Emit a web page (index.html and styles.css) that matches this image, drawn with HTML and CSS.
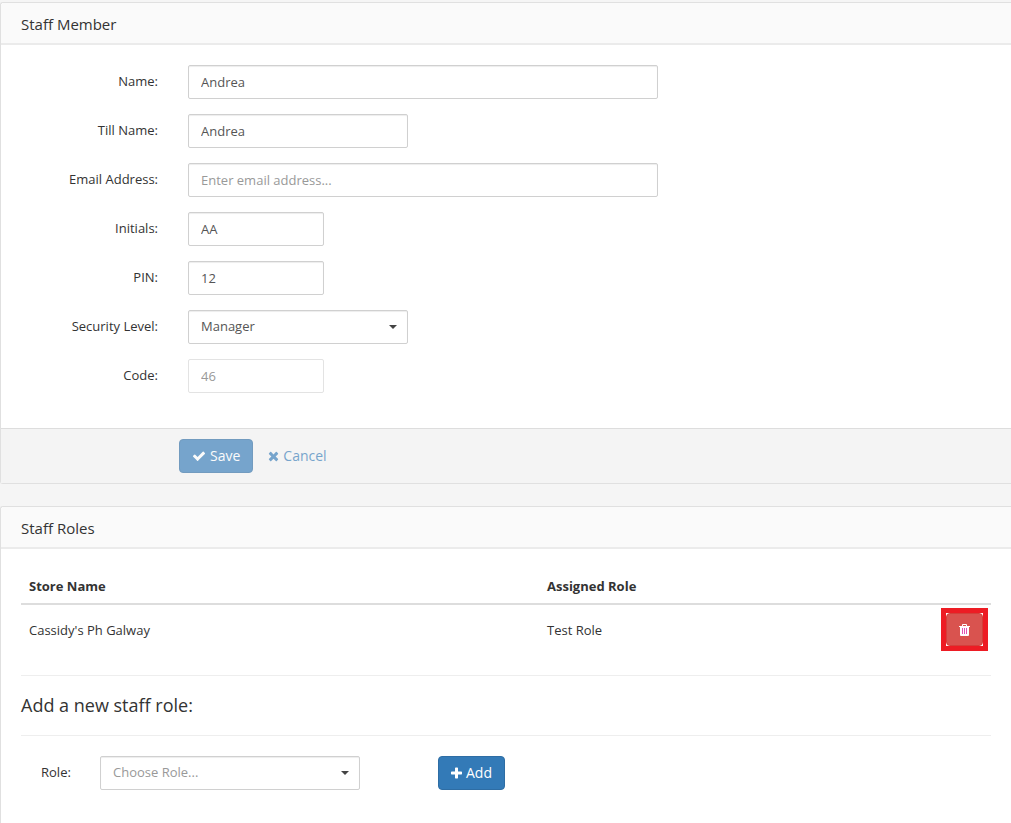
FILE: index.html
```html
<!DOCTYPE html>
<html lang="en">
<head>
<meta charset="utf-8">
<title>Staff Member</title>
<link rel="stylesheet" href="styles.css">
</head>
<body>
<main>
  <form class="panel">
    <h2 class="panel-title">Staff Member</h2>
    <div class="panel-body fields">
      <div class="field"><label for="name">Name:</label><input class="control wide" id="name" type="text" value="Andrea"></div>
      <div class="field"><label for="till">Till Name:</label><input class="control medium" id="till" type="text" value="Andrea"></div>
      <div class="field"><label for="email">Email Address:</label><input class="control wide" id="email" type="email" placeholder="Enter email address..."></div>
      <div class="field"><label for="initials">Initials:</label><input class="control small" id="initials" type="text" value="AA"></div>
      <div class="field"><label for="pin">PIN:</label><input class="control small" id="pin" type="text" value="12"></div>
      <div class="field"><label for="level">Security Level:</label>
        <div class="select medium"><select class="control" id="level"><option>Manager</option></select></div>
      </div>
      <div class="field"><label for="code">Code:</label><input class="control small" id="code" type="text" value="46" disabled></div>
    </div>
    <div class="panel-footer">
      <button class="btn primary" type="submit" disabled>
        <svg class="icon-check" viewBox="0 0 1792 1792" aria-hidden="true"><path d="M1671 566q0 40-28 68l-724 724-136 136q-28 28-68 28t-68-28l-136-136-362-362q-28-28-28-68t28-68l136-136q28-28 68-28t68 28l294 295 656-657q28-28 68-28t68 28l136 136q28 28 28 68z"/></svg>
        Save
      </button>
      <button class="btn link" type="button" disabled>
        <svg class="icon-plain" viewBox="0 0 1408 1792" aria-hidden="true"><path d="M1298 1322q0 40-28 68l-136 136q-28 28-68 28t-68-28l-294-294-294 294q-28 28-68 28t-68-28l-136-136q-28-28-28-68t28-68l294-294-294-294q-28-28-28-68t28-68l136-136q28-28 68-28t68 28l294 294 294-294q28-28 68-28t68 28l136 136q28 28 28 68t-28 68l-294 294 294 294q28 28 28 68z"/></svg>
        Cancel
      </button>
    </div>
  </form>

  <section class="panel roles">
    <h2 class="panel-title">Staff Roles</h2>
    <div class="panel-body">
      <table>
        <thead><tr><th class="store">Store Name</th><th>Assigned Role</th><th></th></tr></thead>
        <tbody><tr>
          <td>Cassidy's Ph Galway</td>
          <td>Test Role</td>
          <td class="actions"><div class="highlight"><button class="btn danger" type="button" aria-label="Delete role">
            <svg class="icon-trash" viewBox="0 0 11 12" aria-hidden="true"><path fill-rule="evenodd" d="M3 2V1Q3 0 4 0h3q1 0 1 1v1h3v1h-1v8q0 1-1 1H2q-1 0-1-1V3H0V2zM4 1v1h3V1zM3 4v6h1V4zM5 4v6h1V4zM7 4v6h1V4z"/><path class="slots" d="M3 4h1v6H3zM5 4h1v6H5zM7 4h1v6H7z"/></svg>
          </button></div></td>
        </tr></tbody>
      </table>
      <h3 class="subtitle">Add a new staff role:</h3>
      <form class="add-role">
        <label for="role">Role:</label>
        <div class="select role-select"><select class="control empty" id="role"><option>Choose Role...</option></select></div>
        <button class="btn primary" type="button">
          <svg class="icon-plain" viewBox="0 0 1408 1792" aria-hidden="true"><path d="M1408 800v192q0 40-28 68t-68 28H896v416q0 40-28 68t-68 28H608q-40 0-68-28t-28-68v-416H96q-40 0-68-28t-28-68V800q0-40 28-68t68-28h416V288q0-40 28-68t68-28h192q40 0 68 28t28 68v416h416q40 0 68 28t28 68z"/></svg>
          Add
        </button>
      </form>
    </div>
  </section>
</main>
</body>
</html>
```
FILE: styles.css
```css
* { box-sizing: border-box; }

body {
  margin: 0;
  background: #f5f5f5;
  color: #333;
  font: 13px/19px "Open Sans", sans-serif;
}

main {
  display: flex;
  flex-direction: column;
  gap: 22px;
  min-height: 100vh;
  padding-top: 2px;
}

.panel {
  border: 1px solid #e0e0e0;
  border-right: 0;
  border-radius: 3px 0 0 3px;
  background: #fff;
}

.roles {
  flex: 1;
  border-bottom: 0;
  border-bottom-left-radius: 0;
}

.panel-title {
  margin: 0;
  padding: 11px 20px 9px;
  border-bottom: 2px solid #ebebeb;
  border-top-left-radius: 3px;
  background: #fafafa;
  font-size: 15px;
  line-height: 20px;
  font-weight: 400;
}

.panel-body { padding: 20px; }

.fields {
  display: grid;
  gap: 15px;
  padding-bottom: 35px;
}

.field {
  display: grid;
  grid-template-columns: 137px 1fr;
  column-gap: 30px;
}

.field label {
  padding-top: 7px;
  text-align: right;
}

.control {
  width: 100%;
  height: 34px;
  padding: 6px 12px;
  border: 1px solid #d0d0d0;
  border-radius: 2px;
  background: #fff;
  box-shadow: inset 0 1px 1px rgba(0, 0, 0, 0.075);
  color: #555;
  font: inherit;
}

.control::placeholder, .control.empty { color: #999; opacity: 1; }
.control:disabled { border-color: #e3e3e3; box-shadow: none; color: #999; }
.wide { max-width: 470px; }
.medium { max-width: 220px; }
.small { max-width: 136px; }

.select {
  position: relative;
  width: 100%;
}

.select select {
  appearance: none;
  padding-block: 5px 7px;
}

.select::after {
  content: "";
  position: absolute;
  top: 15px;
  right: 11px;
  border: 4px solid transparent;
  border-top-color: #444;
  border-bottom: 0;
  pointer-events: none;
}

.panel-footer {
  display: flex;
  gap: 2px;
  padding: 10px 20px 10px 178px;
  border-top: 1px solid #ddd;
  background: #f4f4f4;
}

.btn {
  display: flex;
  align-items: center;
  justify-content: center;
  gap: 4px;
  height: 34px;
  padding: 0 12px;
  border: 1px solid transparent;
  border-radius: 4px;
  background: none;
  font: 14px/20px "Open Sans", sans-serif;
}

.btn:disabled { opacity: 0.65; }
.btn svg { fill: currentColor; }
.primary { border-color: #2e6da4; background: #337ab7; color: #fff; }
.link { color: #337ab7; font-weight: 500; }

.icon-check { width: 14px; height: 14px; }
.icon-plain { width: 11px; height: 14px; }
.icon-trash { width: 11px; height: 12px; }

table {
  width: 100%;
  border-collapse: separate;
  border-spacing: 0;
}

th {
  height: 36px;
  padding: 8px;
  border-bottom: 2px solid #ddd;
  text-align: left;
  font-weight: 700;
  line-height: 18px;
}

.store { width: 518px; }
td { height: 50px; padding: 8px; }
.actions { vertical-align: top; }

.highlight {
  width: 37px;
  margin-left: auto;
  outline: 5px solid #ed1c24;
}

.danger {
  width: 100%;
  height: 33px;
  padding: 0;
  border-color: #d43f3a;
  background: #d9534f;
  color: #fff;
}

.btn .slots { fill: #e255b5; }

.subtitle {
  margin: 20px 0;
  padding: 19px 0 20px;
  border: solid #eee;
  border-width: 1px 0;
  font-size: 18px;
  line-height: 20px;
  font-weight: 400;
}

.add-role {
  display: flex;
  padding-left: 20px;
}

.add-role label {
  width: 59px;
  padding-top: 7px;
}

.role-select {
  max-width: 260px;
  margin-right: 78px;
}
```
